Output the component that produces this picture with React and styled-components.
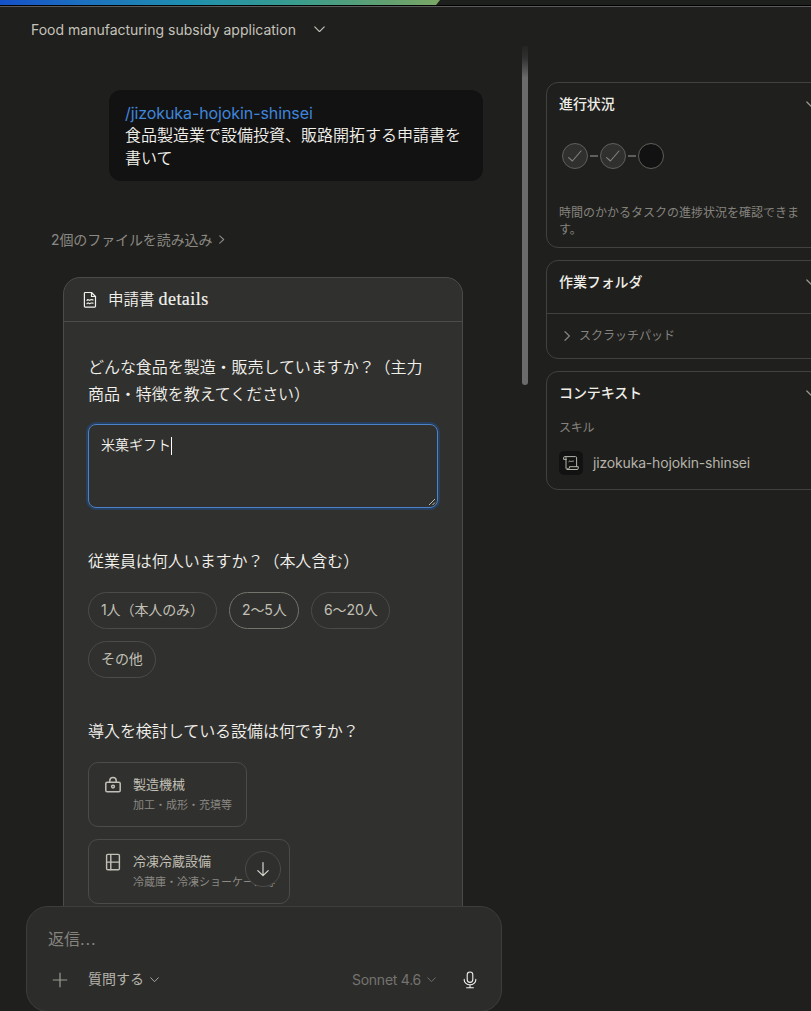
import React from 'react';
import styled, { createGlobalStyle } from 'styled-components';

const GlobalStyle = createGlobalStyle`
  * {
    box-sizing: border-box;
  }
  body {
    margin: 0;
    background: #1f1f1d;
    font-family: 'Inter', 'Noto Sans CJK JP', sans-serif;
  }
`;

const S = {
  Window: styled.div`
    display: flex;
    flex-direction: column;
    width: 811px;
    height: 1011px;
    overflow: hidden;
    background: #1f1f1d;
    color: #f2f1ec;
  `,
  Desktop: styled.div`
    flex: none;
    height: 5px;
    background: #1d1f1d;
  `,
  Wallpaper: styled.div`
    width: 440px;
    height: 5px;
    background: linear-gradient(90deg, #1450c8 0, #1c6fc0 80px, #1f8fae 190px, #3a9c8c 300px, #63a070 390px, #7aa765 440px);
    clip-path: polygon(0 0, 100% 0, 436px 100%, 0 100%);
  `,
  Header: styled.header`
    display: flex;
    align-items: center;
    flex: none;
    gap: 18px;
    height: 44px;
    padding: 3px 0 0 31px;
    border-top: 1px solid #000;
    box-shadow: inset 0 1px 0 #5b5b5b;
    color: #c5c3bb;
  `,
  Title: styled.h1`
    margin: 0;
    font-size: 14px;
    font-weight: 400;
    white-space: nowrap;
  `,
  Body: styled.div`
    display: flex;
    flex: 1;
    min-height: 0;
  `,
  Chat: styled.main`
    display: flex;
    flex-direction: column;
    width: 522px;
    flex: none;
  `,
  Scroll: styled.div`
    position: relative;
    display: flex;
    flex-direction: column;
    height: 858px;
    flex: none;
    overflow: hidden;
    padding-top: 41px;
  `,
  Bubble: styled.div`
    width: 374px;
    height: 91px;
    margin-left: 109px;
    flex: none;
    padding: 12px 16px;
    border-radius: 12px;
    background: #121212;
    font-size: 16px;
    font-weight: 350;
    line-height: 22.4px;
  `,
  Command: styled.div`
    color: #3f86dc;
    font-weight: 400;
    letter-spacing: -0.09px;
  `,
  FileRead: styled.div`
    display: flex;
    align-items: center;
    gap: 7px;
    height: 20px;
    flex: none;
    margin: 48px 0 0 51px;
    font-size: 14px;
    letter-spacing: -0.1px;
    color: #8b8983;
  `,
  Form: styled.section`
    width: 400px;
    height: 700px;
    flex: none;
    margin: 28px 0 0 63px;
    border: 1px solid #4b4b48;
    border-radius: 17px 17px 0 0;
    background: #30302e;
  `,
  FormHeader: styled.div`
    display: flex;
    align-items: center;
    gap: 11px;
    height: 44px;
    padding-left: 19px;
    border-bottom: 1px solid #4b4b48;
  `,
  FormName: styled.span`
    display: flex;
    align-items: baseline;
    gap: 4px;
    margin-top: -2px;
  `,
  Ja: styled.span`
    font-size: 15.5px;
    font-weight: 350;
  `,
  Serif: styled.span`
    font-family: 'Liberation Serif', serif;
    font-size: 18px;
    letter-spacing: 0.45px;
    -webkit-text-stroke: 0.2px;
  `,
  FormBody: styled.div`
    display: flex;
    flex-direction: column;
    padding: 32px 24px 0;
  `,
  Question: styled.p`
    margin: ${(p) => p.$top || 0}px 0 0;
    font-size: 16px;
    font-weight: 350;
    letter-spacing: -0.05px;
    line-height: 27px;
    white-space: nowrap;
  `,
  Field: styled.div`
    position: relative;
    height: 84px;
    margin: 16px 0 0;
    width: 350px;
    padding: 10px 12px;
    border: 1px solid #4a83cb;
    border-radius: 8px;
    box-shadow: 0 0 0 2px #28405f;
    font-size: 14px;
    font-weight: 350;
    line-height: 20px;
  `,
  Caret: styled.span`
    display: inline-block;
    width: 1px;
    height: 18px;
    background: #fff;
    vertical-align: middle;
    margin-top: -1px;
  `,
  Grip: styled.svg`
    position: absolute;
    right: 1px;
    bottom: 1px;
  `,
  Pills: styled.div`
    display: flex;
    flex-wrap: wrap;
    gap: 12px;
    margin-top: 17px;
    padding-bottom: 1px;
  `,
  Pill: styled.button`
    width: ${(p) => p.$w}px;
    height: 37px;
    padding: 0 0 3px 12px;
    border: 1px solid ${(p) => (p.$active ? '#73726d' : '#4b4b48')};
    border-radius: 19px;
    background: none;
    color: #c2c0b6;
    font-family: inherit;
    font-size: 14px;
    letter-spacing: -0.1px;
    text-align: left;
    white-space: nowrap;
  `,
  Options: styled.div`
    display: flex;
    flex-direction: column;
    gap: 12px;
    margin-top: 17px;
  `,
  Option: styled.div`
    display: flex;
    gap: 11px;
    width: ${(p) => p.$w}px;
    height: 65px;
    padding: 13px 0 0 15px;
    border: 1px solid #4b4b48;
    border-radius: 10px;
    color: #c2c0b6;
  `,
  OptionText: styled.div`
    margin-top: -1px;
    white-space: nowrap;
  `,
  OptionName: styled.div`
    font-size: 13px;
    line-height: 18px;
  `,
  OptionNote: styled.div`
    margin-top: 4px;
    font-size: 11px;
    line-height: 16px;
    color: #8b8983;
  `,
  ScrollDown: styled.button`
    position: absolute;
    left: 245px;
    bottom: 20px;
    display: flex;
    align-items: center;
    justify-content: center;
    width: 36px;
    height: 36px;
    padding: 0;
    border: 1px solid #4b4b48;
    border-radius: 50%;
    background: #2f2f2d;
    color: #d8d6ce;
  `,
  Composer: styled.div`
    display: flex;
    flex-direction: column;
    width: 476px;
    height: 106px;
    flex: none;
    margin: -1px 0 0 26px;
    border: 1px solid #3d3d3b;
    border-radius: 22px;
    background: #2c2c2b;
    z-index: 1;
  `,
  Placeholder: styled.div`
    margin: 20px 0 0 21px;
    font-size: 16px;
    line-height: 24px;
    color: #85837d;
  `,
  Dots: styled.span`
    letter-spacing: 0.9px;
  `,
  Tools: styled.div`
    display: flex;
    align-items: center;
    height: 24px;
    margin-top: 17px;
    padding: 0 23px 0 25px;
    font-size: 14px;
    color: #9c9a92;
  `,
  Mode: styled.span`
    display: flex;
    align-items: center;
    gap: 6px;
    margin: -1px 0 0 20px;
    color: #b5b3aa;
  `,
  Lift: styled.span`
    margin-top: -3px;
  `,
  Model: styled.span`
    display: flex;
    align-items: center;
    gap: 6px;
    margin: -1px 26px 0 auto;
    letter-spacing: -0.25px;
    color: #74736e;
  `,
  Mic: styled.svg`
    color: #f2f1ec;
  `,
  Track: styled.div`
    width: 6px;
    height: 339px;
    flex: none;
    margin-top: -3px;
    border-radius: 0 0 3px 3px;
    background: linear-gradient(#242423 0, #303030 12px, #6b6b6b 32px);
  `,
  Side: styled.aside`
    display: flex;
    flex-direction: column;
    gap: 12px;
    width: 280px;
    flex: none;
    margin-left: 18px;
    padding-top: 33px;
  `,
  Panel: styled.section`
    height: ${(p) => p.$h}px;
    border: 1px solid #41413f;
    border-radius: 12px;
  `,
  PanelHead: styled.div`
    display: flex;
    align-items: center;
    justify-content: space-between;
    height: 20px;
    margin-top: 12px;
    padding: 0 7px 0 12px;
    color: #9c9a92;
  `,
  PanelName: styled.h2`
    margin: -4px 0 0;
    font-size: 14px;
    font-weight: 500;
    letter-spacing: -0.1px;
    color: #efeee8;
  `,
  Steps: styled.div`
    display: flex;
    align-items: center;
    gap: 2px;
    margin: 28px 0 0 15px;
  `,
  Step: styled.span`
    display: flex;
    align-items: center;
    justify-content: center;
    width: 26px;
    height: 26px;
    border: 1px solid #5f5f5b;
    border-radius: 50%;
    background: ${(p) => (p.$done ? '#30302e' : '#121212')};
    color: #85837d;
  `,
  Dash: styled.span`
    width: 8px;
    height: 2px;
    background: #5f5f5b;
  `,
  Hint: styled.p`
    margin: 35px 0 0 12px;
    width: 244px;
    font-size: 12px;
    line-height: 17.3px;
    color: #85837d;
  `,
  Scratch: styled.div`
    display: flex;
    align-items: center;
    gap: 8px;
    height: 44px;
    margin-top: 20px;
    padding-left: 16px;
    border-top: 1px solid #41413f;
    font-size: 12px;
    color: #85837d;
  `,
  Label: styled.div`
    margin: 15px 0 0 12px;
    font-size: 12px;
    line-height: 18px;
    letter-spacing: -0.2px;
    color: #85837d;
  `,
  Skill: styled.div`
    display: flex;
    align-items: center;
    gap: 10px;
    margin: 14px 0 0 12px;
    font-size: 14px;
    letter-spacing: -0.17px;
    color: #b5b3aa;
  `,
  SkillName: styled.span`
    margin-top: -2px;
  `,
  SkillIcon: styled.span`
    display: flex;
    align-items: center;
    justify-content: center;
    width: 24px;
    height: 24px;
    border-radius: 5px;
    background: #121212;
  `,
};

function Icon({ w = 16, h = w, box = `0 0 ${w} ${h}`, stroke = 1, children }) {
  return (
    <svg
      width={w}
      height={h}
      viewBox={box}
      fill="none"
      stroke="currentColor"
      strokeWidth={stroke}
      strokeLinecap="round"
      strokeLinejoin="round"
    >
      {children}
    </svg>
  );
}

function ChevronDown({ w = 10 }) {
  return (
    <Icon w={w} h={w * 0.6} box="0 0 10 6">
      <path d="M0.7 0.8 5 5.2 9.3 0.8" />
    </Icon>
  );
}

function ChevronRight({ h = 10 }) {
  return (
    <Icon w={h * 0.6} h={h} box="0 0 6 10" stroke={1.2}>
      <path d="M0.8 0.9 5.2 5 0.8 9.1" />
    </Icon>
  );
}

function PanelTitle({ children }) {
  return (
    <S.PanelHead>
      <S.PanelName>{children}</S.PanelName>
      <ChevronDown w={12} />
    </S.PanelHead>
  );
}

function ApplicationForm() {
  return (
    <S.Form>
      <S.FormHeader>
        <Icon w={14} h={18} stroke={1.2}>
          <path d="M2.2 1.5h6.3l4 4v9.8a.8.8 0 0 1-.8.8H2.2a.8.8 0 0 1-.8-.8V2.3a.8.8 0 0 1 .8-.8Z" />
          <path d="M8.5 1.5v4h4" />
          <path d="M4 9.4q.9-1.2 1.6-.5t1.4.2 1.4-.4 1.6.2M4 12.7q.9-1.2 1.6-.5t1.4.2 1.4-.4 1.6.2" />
        </Icon>
        <S.FormName>
          <S.Ja>申請書</S.Ja>
          <S.Serif>details</S.Serif>
        </S.FormName>
      </S.FormHeader>
      <S.FormBody>
        <S.Question>
          どんな食品を製造・販売していますか？（主力
          <br />
          商品・特徴を教えてください）
        </S.Question>
        <S.Field>
          米菓ギフト
          <S.Caret />
          <S.Grip width="8" height="8" stroke="#c8c8c8" strokeWidth="0.9">
            <path d="M1 7 7 1M4.5 7 7 4.5" />
          </S.Grip>
        </S.Field>
        <S.Question $top={40}>従業員は何人いますか？（本人含む）</S.Question>
        <S.Pills>
          <S.Pill $w={129}>1人（本人のみ）</S.Pill>
          <S.Pill $w={70} $active>
            2〜5人
          </S.Pill>
          <S.Pill $w={79}>6〜20人</S.Pill>
          <S.Pill $w={68}>その他</S.Pill>
        </S.Pills>
        <S.Question $top={39}>導入を検討している設備は何ですか？</S.Question>
        <S.Options>
          <S.Option $w={159}>
            <Icon w={18} stroke={1.5}>
              <rect x="1.8" y="6.2" width="14.4" height="9.6" rx="1.4" />
              <path d="M5.8 6V4.6a3.2 3.2 0 0 1 6.4 0V6" />
              <circle cx="9" cy="10.6" r="1.4" />
            </Icon>
            <S.OptionText>
              <S.OptionName>製造機械</S.OptionName>
              <S.OptionNote>加工・成形・充填等</S.OptionNote>
            </S.OptionText>
          </S.Option>
          <S.Option $w={202}>
            <Icon w={18} stroke={1.4}>
              <rect x="2.6" y="1.4" width="12.8" height="15.4" rx="1.2" />
              <path d="M6.8 1.4v15.4M2.6 9.1h12.8" />
            </Icon>
            <S.OptionText>
              <S.OptionName>冷凍冷蔵設備</S.OptionName>
              <S.OptionNote>冷蔵庫・冷凍ショーケース等</S.OptionNote>
            </S.OptionText>
          </S.Option>
        </S.Options>
      </S.FormBody>
    </S.Form>
  );
}

function Composer() {
  return (
    <S.Composer>
      <S.Placeholder>
        返信<S.Dots>...</S.Dots>
      </S.Placeholder>
      <S.Tools>
        <Icon w={16} stroke={1.2}>
          <path d="M8 1.2v13.6M1.2 8h13.6" />
        </Icon>
        <S.Mode>
          <S.Lift>質問する</S.Lift>
          <ChevronDown w={9} />
        </S.Mode>
        <S.Model>
          Sonnet 4.6
          <ChevronDown w={9} />
        </S.Model>
        <S.Mic width="16" height="18" fill="none" stroke="currentColor" strokeWidth="1.1" strokeLinecap="round">
          <rect x="5.2" y="1" width="5.6" height="10.4" rx="2.8" />
          <path d="M2.2 8.4v.6a5.8 4.8 0 0 0 11.6 0v-.6M8 14v2.6M4.6 16.8h6.8" />
        </S.Mic>
      </S.Tools>
    </S.Composer>
  );
}

function SidePanels() {
  return (
    <S.Side>
      <S.Panel $h={166}>
        <PanelTitle>進行状況</PanelTitle>
        <S.Steps>
          {[true, true, false].map((done, i) => (
            <React.Fragment key={i}>
              {i > 0 && <S.Dash />}
              <S.Step $done={done}>
                {done && (
                  <Icon w={16} stroke={1.1}>
                    <path d="M1.6 9.6 5.4 13 14 3" />
                  </Icon>
                )}
              </S.Step>
            </React.Fragment>
          ))}
        </S.Steps>
        <S.Hint>時間のかかるタスクの進捗状況を確認できます。</S.Hint>
      </S.Panel>
      <S.Panel $h={99}>
        <PanelTitle>作業フォルダ</PanelTitle>
        <S.Scratch>
          <Icon w={8} h={10} stroke={1.2}>
            <path d="M2 0.7 6.4 5 2 9.3" />
          </Icon>
          <S.Lift>スクラッチパッド</S.Lift>
        </S.Scratch>
      </S.Panel>
      <S.Panel $h={119}>
        <PanelTitle>コンテキスト</PanelTitle>
        <S.Label>スキル</S.Label>
        <S.Skill>
          <S.SkillIcon>
            <Icon w={18}>
              <path d="M4 5.4H1.6V3.8a1.2 1.2 0 0 1 1.2-1.2h10.6a1.2 1.2 0 0 1 1.2 1.2v8.6M4 5.4V3.6M4 5.4v8.8a1.3 1.3 0 0 0 1.3 1.3" />
              <path d="M5.3 15.5h9.7a1.3 1.3 0 0 0 1.3-1.3v-1.5H7.4v1.5a1.2 1.2 0 0 1-2.1 0M6.8 7.6q.8-.9 1.4-.4t1.4.2 1.8-.3" />
            </Icon>
          </S.SkillIcon>
          <S.SkillName>jizokuka-hojokin-shinsei</S.SkillName>
        </S.Skill>
      </S.Panel>
    </S.Side>
  );
}

function App() {
  return (
    <S.Window>
      <GlobalStyle />
      <S.Desktop>
        <S.Wallpaper />
      </S.Desktop>
      <S.Header>
        <S.Title>Food manufacturing subsidy application</S.Title>
        <ChevronDown w={11} />
      </S.Header>
      <S.Body>
        <S.Chat>
          <S.Scroll>
            <S.Bubble>
              <S.Command>/jizokuka-hojokin-shinsei</S.Command>
              食品製造業で設備投資、販路開拓する申請書を書いて
            </S.Bubble>
            <S.FileRead>
              2個のファイルを読み込み
              <ChevronRight h={9} />
            </S.FileRead>
            <ApplicationForm />
            <S.ScrollDown>
              <Icon w={16} stroke={1.2}>
                <path d="M8 1.5v13M2.8 9.6 8 14.6l5.2-5" />
              </Icon>
            </S.ScrollDown>
          </S.Scroll>
          <Composer />
        </S.Chat>
        <S.Track />
        <SidePanels />
      </S.Body>
    </S.Window>
  );
}

export default App;
